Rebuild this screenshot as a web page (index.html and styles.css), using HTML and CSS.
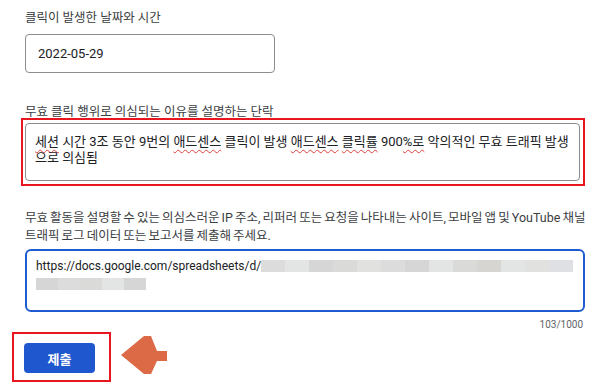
FILE: index.html
```html
<!DOCTYPE html>
<html lang="ko">
<head>
<meta charset="utf-8">
<link rel="stylesheet" href="styles.css">
</head>
<body>
<div class="form">
  <div class="label label-1">클릭이 발생한 날짜와 시간</div>
  <div class="date-box">2022-05-29</div>

  <div class="label label-2">무효 클릭 행위로 의심되는 이유를 설명하는 단락</div>
  <div class="highlight">
    <div class="textarea reason"><span class="sp">세션</span> 시간 3조 동안 9번의 <span class="sp">애드센스</span> 클릭이 발생 <span class="sp">애드센스</span> <span class="sp">클릭률</span> 900<span class="sp">%로</span> 악의적인 무효 트래픽 발생<br>으로 의심됨</div>
  </div>

  <div class="label label-3">무효 활동을 설명할 수 있는 의심스러운 IP 주소, 리퍼러 또는 요청을 나타내는 사이트, 모바일 앱 및 YouTube 채널<br>트래픽 로그 데이터 또는 보고서를 제출해 주세요.</div>
  <div class="textarea focused">
    <div class="url-line"><span class="url">https://docs.google.com/spreadsheets/d/</span><span class="blur"><i class="b1"></i><i class="b2"></i><i class="b3"></i><i class="b4"></i><i class="b5"></i><i class="b1"></i><i class="b3"></i><i class="b2"></i><i class="b4"></i><i class="b6"></i><i class="b2"></i><i class="b5"></i><i class="b7"></i></span></div>
    <div class="url-line"><span class="blur short"><i class="b3"></i><i class="b1"></i><i class="b4"></i><i class="b2"></i><i class="b3"></i></span></div>
  </div>
  <div class="counter">103/1000</div>

  <div class="submit-row">
    <div class="btn-highlight"><button class="btn">제출</button></div>
    <svg class="arrow" width="48" height="40" viewBox="0 0 48 40"><polygon points="1,20 24,1 31,1 37,16 47,16 47,26 37,26 31,39 24,39" fill="#dc6a47"/></svg>
  </div>
</div>
</body>
</html>
```

FILE: styles.css
```css
html, body {
  margin: 0;
  padding: 0;
  background: #ffffff;
}
body {
  font-family: Roboto, "Noto Sans CJK KR", sans-serif;
  color: #202124;
}
.form {
  padding: 11px 0 0 25px;
  width: 560px;
}
.label {
  font-size: 12.5px;
  line-height: 14px;
  color: #3c4043;
  white-space: nowrap;
}
.label-1 { margin-bottom: 9px; }
.label-2 { margin-top: 32px; margin-bottom: -1px; }
.label-3 {
  margin-top: 23px;
  line-height: 18px;
  margin-bottom: 4px;
  word-spacing: -1px;
}

.date-box {
  box-sizing: border-box;
  width: 250px;
  height: 39px;
  border: 1px solid #8a8d91;
  border-radius: 4px;
  display: flex;
  align-items: center;
  padding-left: 12px;
  font-size: 13px;
}

.highlight {
  margin-left: -4px;
  border: 2px solid #e8171f;
  padding: 3px 3px 3px 2px;
}
.textarea {
  box-sizing: border-box;
  border: 1px solid #8a8d91;
  border-radius: 4px;
  font-size: 13px;
  line-height: 16px;
  white-space: nowrap;
}
.reason {
  height: 58px;
  padding: 10px 0 0 9px;
}
.sp {
  text-decoration: underline wavy #e0403a;
  text-decoration-thickness: 1px;
  text-underline-offset: 3px;
  text-decoration-skip-ink: none;
}
.focused {
  height: 63px;
  border: 2px solid #1f5bd0;
  border-radius: 6px;
  padding: 7px 0 0 9px;
}
.url-line {
  height: 16px;
  display: flex;
  align-items: center;
}
.url {
  font-size: 12px;
}
.blur {
  display: inline-flex;
  height: 12px;
}
.blur i {
  display: block;
  width: 24px;
  height: 12px;
}
.blur .b1 { background: #dcdcdc; }
.blur .b2 { background: #e3e4e4; }
.blur .b3 { background: #d6d6d6; }
.blur .b4 { background: #dadad8; }
.blur .b5 { background: #e1e1e0; }
.blur .b6 { background: #d7d5d2; }
.blur .b7 { background: #dfe0e3; }
.blur.short { margin-top: 3px; }
.blur.short i { width: 22px; }

.counter {
  text-align: right;
  font-size: 10px;
  line-height: 12px;
  color: #5f6368;
  margin-top: 7px;
  padding-right: 2px;
}

.submit-row {
  display: flex;
  align-items: center;
  margin-top: 1px;
  margin-left: -13px;
}
.btn-highlight {
  border: 2px solid #e8171f;
  padding: 9px 14px 7px 10px;
}
.btn {
  display: block;
  width: 71px;
  height: 30px;
  border: none;
  border-radius: 4px;
  background: #1f57cf;
  color: #ffffff;
  font-family: Roboto, "Noto Sans CJK KR", sans-serif;
  font-size: 13px;
  font-weight: 700;
}
.arrow {
  margin-left: 9px;
  margin-top: -4px;
}
```
